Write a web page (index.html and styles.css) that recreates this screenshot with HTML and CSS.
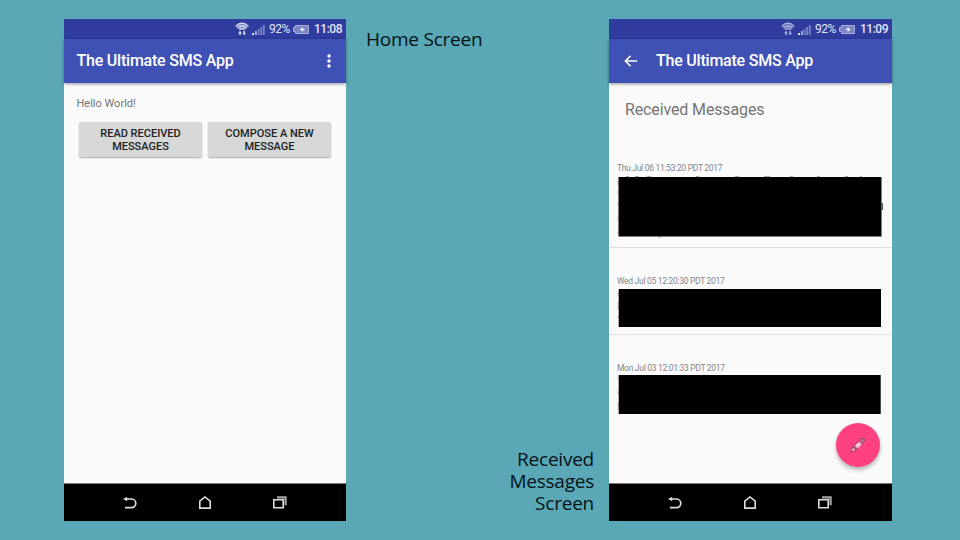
FILE: index.html
```
<!DOCTYPE html>
<html lang="en">
<head>
<meta charset="utf-8">
<title>The Ultimate SMS App</title>
<link rel="stylesheet" href="styles.css">
</head>
<body>
<svg width="0" height="0" class="defs" aria-hidden="true">
  <symbol id="wifi" viewBox="0 0 14 14">
    <path d="M.4 4.200Q7-3 13.600 4.200L9.500 8.200Q7 6.400 4.500 8.200z" fill="currentColor" opacity=".45"/>
    <path d="M.6 4.400Q7-2 13.400 4.400M2.600 6.200Q7 1.800 11.400 6.200M4.600 7.800Q7 5.400 9.400 7.800" fill="none" stroke="currentColor" stroke-width="1.200"/>
    <path d="M5 8.800l1.800 2.200H5.800V13H4.200v-2H3.200zM9.200 13.200L7.400 11h1V9H10v2h1z" fill="currentColor"/>
  </symbol>
  <symbol id="signal" viewBox="0 0 13 10">
    <path d="M0 8h2v2H0z" fill="#e4e6f5"/>
    <path d="M3 6h1.800v4H3z" fill="#b0b5df"/>
    <path d="M5.600 4h1.800v6H5.600zM8.200 2H10v8H8.200zM10.800 0h1.900v10h-1.900z" fill="#7a83c8"/>
  </symbol>
  <symbol id="battery" viewBox="0 0 16 9">
    <path d="M2.500.5h13v8h-13V6.500H.5v-4h2z" fill="#7d84c6" stroke="#a9aedb"/>
    <path d="M7 4.500l2.500-2v1.500h2L9 6.500V5z" fill="#f3f4ff" stroke="#f3f4ff" stroke-width=".5"/>
  </symbol>
  <symbol id="back" viewBox="0 0 14 12">
    <path d="M3 2h5.500a4.200 4.200 0 0 1 0 8.600H2" fill="none" stroke="currentColor" stroke-width="1.700"/>
    <path d="M0 2L4.200-.2v4.400z" fill="currentColor"/>
  </symbol>
  <symbol id="home" viewBox="0 0 12 13">
    <path d="M.8 5.200L6 1l5.200 4.200v6.900H.8z" fill="none" stroke="currentColor" stroke-width="1.600"/>
  </symbol>
  <symbol id="recent" viewBox="0 0 14 13">
    <path d="M.8 3.800h9.400v8H.8z" fill="none" stroke="currentColor" stroke-width="1.600"/>
    <path d="M4 1.400h8.600v7.800" fill="none" stroke="currentColor" stroke-width="2.200" opacity=".75"/>
  </symbol>
</svg>
<main class="slide">
  <section class="phone">
    <div class="status">
      <svg class="wifi"><use href="#wifi"/></svg>
      <svg class="signal"><use href="#signal"/></svg>
      <span class="percent">92%</span>
      <svg class="battery"><use href="#battery"/></svg>
      <span class="clock">11:08</span>
    </div>
    <header class="appbar">
      <h1>The Ultimate SMS App</h1>
      <svg class="more" viewBox="0 0 4 14"><g fill="#fff"><circle cx="2" cy="2" r="1.700"/><circle cx="2" cy="7" r="1.700"/><circle cx="2" cy="12" r="1.700"/></g></svg>
    </header>
    <div class="content home">
      <p class="hello">Hello World!</p>
      <div class="buttons">
        <button>READ RECEIVED<br>MESSAGES</button>
        <button>COMPOSE A NEW<br>MESSAGE</button>
      </div>
    </div>
    <nav class="navbar">
      <svg class="nav-back"><use href="#back"/></svg>
      <svg class="nav-home"><use href="#home"/></svg>
      <svg class="nav-recent"><use href="#recent"/></svg>
    </nav>
  </section>
  <h2 class="caption first">Home Screen</h2>
  <h2 class="caption second">Received<br>Messages<br>Screen</h2>
  <section class="phone wide">
    <div class="status">
      <svg class="wifi dim"><use href="#wifi"/></svg>
      <svg class="signal"><use href="#signal"/></svg>
      <span class="percent">92%</span>
      <svg class="battery"><use href="#battery"/></svg>
      <span class="clock">11:09</span>
    </div>
    <header class="appbar">
      <svg class="arrow" viewBox="0 0 14 12"><path d="M13.200 6H1.500M6.600.8L1.400 6l5.200 5.200" fill="none" stroke="#fff" stroke-width="1.600"/></svg>
      <h1>The Ultimate SMS App</h1>
    </header>
    <div class="content">
      <h3>Received Messages</h3>
      <ul class="messages">
        <li class="one">
          <time>Thu Jul 06 11:53:20 PDT 2017</time>
          <svg class="redacted" viewBox="0 0 267 62"><path d="M1.500 1h263v59.500h-263z"/><path d="M9 .7h3m6 0h4m8 0h4m45 0h3m36 0h4m25 0h6m20 0h3m24 0h3m25 0h3m12 0h2M41 61h3M1.200 5v5m0 5v3m0 8v4m0 9v6m0 10v3" stroke="#777" stroke-width=".8"/><path d="M265.300 27v7" stroke="#555" stroke-width="1.500"/></svg>
        </li>
        <li class="two">
          <time>Wed Jul 05 12:20:30 PDT 2017</time>
          <svg class="redacted" viewBox="0 0 267 40"><path d="M1.700 1h262.300v38H1.700z"/><path d="M1.300 4v4m0 6v8m0 6v2" stroke="#888"/></svg>
        </li>
        <li class="three">
          <time>Mon Jul 03 12:01:33 PDT 2017</time>
          <svg class="redacted" viewBox="0 0 267 41"><path d="M1.700 1h262v39H1.700z"/><path d="M1.300 3v2m0 12v3m0 8v8" stroke="#888"/></svg>
        </li>
      </ul>
      <div class="fab">
        <svg viewBox="0 0 16 16"><path d="M.8 15.200l1.600-5L11.200 1.400q1.400-1 2.800.4t.4 2.800L5.600 13.400z" fill="#b65079" stroke="#85405f" stroke-width=".8"/><path d="M4.800 8.700l4-4 2.900 2.900-4 4z" fill="#ffc4d7"/><path d="M1.600 14.300l1.300-3.400 2.200 2.100z" fill="#f8d3df"/><path d="M10 3.500l2.800 2.800M11.600 2.200l2.400 2.400" stroke="#e58ead" stroke-width=".8"/></svg>
      </div>
    </div>
    <nav class="navbar">
      <svg class="nav-back"><use href="#back"/></svg>
      <svg class="nav-home"><use href="#home"/></svg>
      <svg class="nav-recent"><use href="#recent"/></svg>
    </nav>
  </section>
</main>
</body>
</html>
```
FILE: styles.css
```
* { box-sizing: border-box; }
body, h1, h2, h3, p, ul { margin: 0; padding: 0; }
body { background: #5aa7b5; font-family: Roboto, sans-serif; }
.defs { position: absolute; }
svg { display: block; flex: none; }
.slide { display: flex; width: 960px; height: 540px; padding: 19px 68px 19px 64px; }

.phone { display: flex; flex-direction: column; width: 282px; height: 502px; background: #fafafa; flex: none; }
.phone.wide { width: 283px; }

.status { display: flex; align-items: center; justify-content: flex-end; height: 20px; padding-right: 3px; background: #303d9f; color: #e4e6f6; font-size: 12px; line-height: 20px; flex: none; }
.wifi { width: 14px; height: 14px; margin-right: 3px; color: #dcdff4; }
.wifi.dim { color: #a9afdd; }
.signal { width: 13px; height: 10px; margin: 2px 4px 0 0; }
.percent { width: 21px; margin-right: 3px; white-space: nowrap; letter-spacing: -.5px; }
.battery { width: 16px; height: 9px; margin-right: 5px; }
.clock { width: 29px; font-weight: 500; letter-spacing: -.5px; white-space: nowrap; }

.appbar { display: flex; align-items: center; height: 44px; padding: 0 15px 0 12.500px; background: #4051b5; box-shadow: 0 1px 3px rgba(0, 0, 0, .4); color: #fff; flex: none; }
.appbar h1 { font-size: 16px; line-height: 20px; font-weight: 500; letter-spacing: -.22px; white-space: nowrap; }
.more { width: 4px; height: 14px; margin-left: auto; }
.arrow { width: 14px; height: 12px; margin: 0 18px 0 2.500px; }

.content { position: relative; flex: 1; }
.home { padding: 14px 12.500px 0; }
.hello { color: #757575; font-size: 11px; line-height: 14px; }
.buttons { display: flex; gap: 6px; margin: 11px 2.500px 0; }
button { flex: 1; height: 35px; border: 0; border-radius: 2px; padding: 0; background: #d6d7d7; box-shadow: 0 1px 1.500px rgba(0, 0, 0, .3); color: #212121; font: 500 11px/13px Roboto, sans-serif; white-space: nowrap; }

.navbar { display: flex; align-items: center; height: 37px; background: #000; box-shadow: 0 -1px 0 #777; color: #ddd; flex: none; }
.nav-back { width: 14px; height: 12px; margin-left: 59px; overflow: visible; }
.nav-home { width: 12px; height: 13px; margin-left: 62px; }
.nav-recent { width: 14px; height: 13px; margin-left: 62px; }

.caption { font: 400 19px/22px "Open Sans", sans-serif; letter-spacing: -.23px; color: #031318; }
.first { margin: 9px 0 0 20px; }
.second { align-self: flex-end; margin: 0 15px 7px auto; text-align: right; }

h3 { padding: 17px 0 0 16px; color: #757575; font-size: 16px; font-weight: 400; letter-spacing: -.13px; line-height: 20px; }
.messages { list-style: none; margin-top: 28px; }
.messages li { padding: 16px 0 0 8px; }
time { display: block; color: #858585; font-size: 8.500px; letter-spacing: -.3px; line-height: 10px; white-space: nowrap; }
.redacted { width: 267px; margin-top: 3px; }
.one, .two { border-bottom: 1px solid #e0e0e0; }
.one { height: 100px; }
.two { height: 87px; }
.messages .one { padding-top: 15px; }
.messages .two, .messages .three { padding-top: 28px; }
.two .redacted { margin-top: 1.600px; }
.three .redacted { margin-top: 1px; }
.fab { position: absolute; right: 12.500px; bottom: 17.500px; display: flex; align-items: center; justify-content: center; width: 44px; height: 44px; border-radius: 50%; background: #ff4081; box-shadow: 0 3px 4px rgba(0, 0, 0, .28); }
.fab svg { width: 16px; height: 16px; }
```
